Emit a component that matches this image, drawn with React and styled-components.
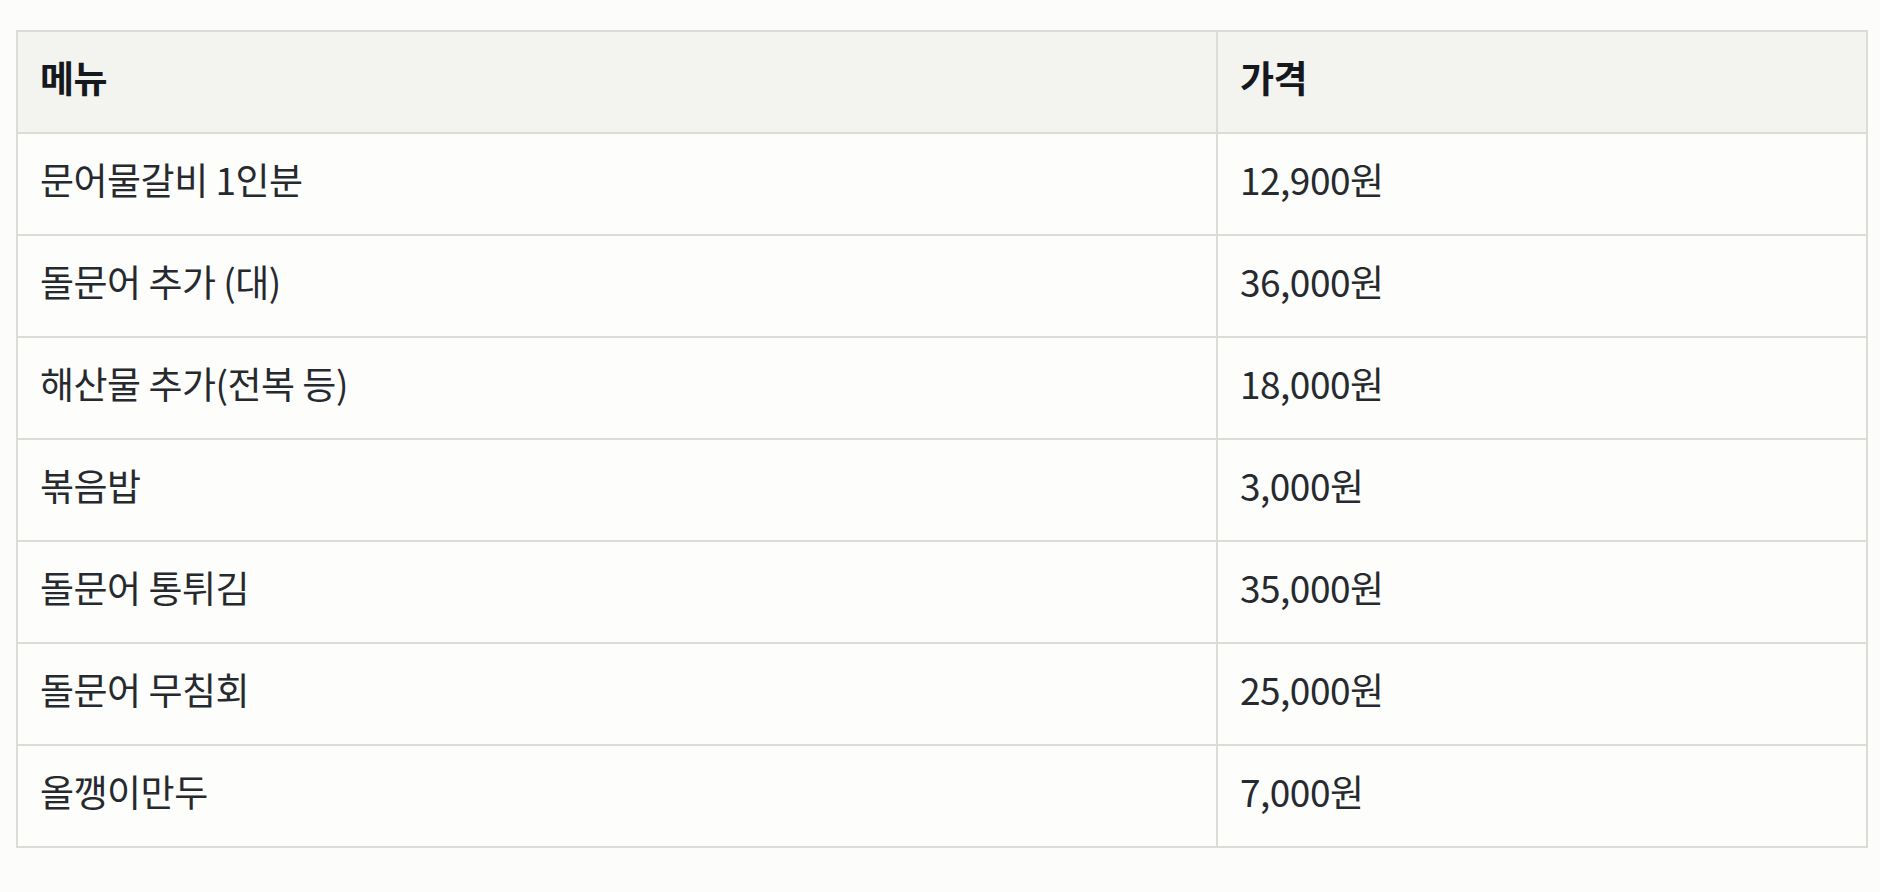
import React from "react";
import styled, { createGlobalStyle } from "styled-components";

const Global = createGlobalStyle`
  html, body { margin: 0; padding: 0; background: #fcfcfa; }
  body { font-family: "Noto Sans CJK KR", "Noto Sans", sans-serif; color: #22262b; }
`;

const Page = styled.div`
  padding: 30px 14px 0 16px;
`;

const Table = styled.table`
  width: 1850px;
  border-collapse: collapse;
  table-layout: fixed;
  border: 2px solid #dcdcd7;
`;

const Col = styled.col`
  width: ${(p) => p.$w}px;
`;

const HeadCell = styled.th`
  height: 90px;
  padding: 0 22px 10px;
  line-height: 1.2;
  text-align: left;
  vertical-align: middle;
  background: #f3f3f0;
  border: 2px solid #dcdcd7;
  font-size: 37px;
  font-weight: 700;
  color: #15191e;
  letter-spacing: -0.5px;
`;

const Cell = styled.td`
  height: 90px;
  padding: 0 22px 10px;
  line-height: 1.2;
  text-align: left;
  vertical-align: middle;
  background: #fdfdfb;
  border: 2px solid #dcdcd7;
  font-size: 37px;
  font-weight: 400;
  color: #262a2f;
  letter-spacing: -0.5px;
`;

const rows = [
  ["문어물갈비 1인분", "12,900원"],
  ["돌문어 추가 (대)", "36,000원"],
  ["해산물 추가(전복 등)", "18,000원"],
  ["볶음밥", "3,000원"],
  ["돌문어 통튀김", "35,000원"],
  ["돌문어 무침회", "25,000원"],
  ["올깽이만두", "7,000원"],
];

export default function App() {
  return (
    <>
      <Global />
      <Page>
        <Table>
          <colgroup>
            <Col $w={1200} />
            <Col $w={650} />
          </colgroup>
          <thead>
            <tr>
              <HeadCell>메뉴</HeadCell>
              <HeadCell>가격</HeadCell>
            </tr>
          </thead>
          <tbody>
            {rows.map(([m, p]) => (
              <tr key={m}>
                <Cell>{m}</Cell>
                <Cell>{p}</Cell>
              </tr>
            ))}
          </tbody>
        </Table>
      </Page>
    </>
  );
}
